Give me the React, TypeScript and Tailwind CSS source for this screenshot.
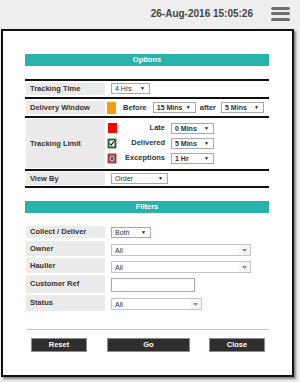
import clsx from 'clsx'

// Plain native-looking dropdown with a black ▼ arrow.
function Pick({ value, className }: { value: string; className?: string }) {
  return (
    <div
      className={clsx(
        'flex h-[11px] items-center justify-between border border-[#a9a9a9] bg-white pl-[3px] pr-[4px] text-[7px] leading-none text-[#333]',
        className,
      )}
    >
      <span>{value}</span>
      <span className="text-[5px] text-[#111]">▼</span>
    </div>
  )
}

// Wide "chosen" style dropdown with a soft grey caret.
function WidePick({ value, className }: { value: string; className?: string }) {
  return (
    <div
      className={clsx(
        'flex h-[12px] items-center justify-between border border-[#c4c4c4] bg-white pl-[3px] text-[7px] leading-none text-[#333]',
        className,
      )}
    >
      <span>{value}</span>
      <span className="flex h-full w-[11px] items-center justify-center bg-[#f6f6f6]">
        <svg width="5" height="3" viewBox="0 0 5 3">
          <path d="M0 0h5L2.5 3z" fill="#8a8a8a" />
        </svg>
      </span>
    </div>
  )
}

function Label({ children, className }: { children: React.ReactNode; className?: string }) {
  return (
    <div
      className={clsx(
        'flex w-[79px] shrink-0 items-center bg-[#ebebeb] pl-[4px] text-[7.5px] font-bold leading-none text-[#333]',
        className,
      )}
    >
      {children}
    </div>
  )
}

function Bar({ title }: { title: string }) {
  return (
    <div className="flex h-[12px] items-center justify-center bg-[#29b1ac] text-[7.5px] font-bold leading-none text-white">
      {title}
    </div>
  )
}

const Rule = () => <div className="h-[2px] bg-[#111]" />

function CheckBox() {
  return (
    <svg width="10" height="11" viewBox="0 0 10 11">
      <rect x="0.5" y="0.5" width="9" height="10" fill="#1f9a3a" />
      <rect x="2" y="2" width="6" height="7" fill="#fff" stroke="#111" strokeWidth="0.8" />
      <path d="M3 5.6l1.3 1.5L7 3.2" fill="none" stroke="#111" strokeWidth="1.1" />
    </svg>
  )
}

function CrossBox() {
  return (
    <svg width="10" height="11" viewBox="0 0 10 11">
      <rect x="0.5" y="0.5" width="9" height="10" fill="#ef3b3b" />
      <rect x="2" y="2" width="6" height="7" fill="#c9c9c9" stroke="#333" strokeWidth="0.8" />
      <path d="M3.2 3.4l3.6 4.2M6.8 3.4L3.2 7.6" stroke="#222" strokeWidth="1" />
    </svg>
  )
}

export default function App() {
  return (
    <div className="h-[382px] w-[300px] overflow-hidden bg-[#eeeeee] font-['Liberation_Sans',Arial,sans-serif]">
      {/* Top bar */}
      <div className="flex h-[29px] items-center justify-end gap-[18px] pb-[2px] pr-[10px]">
        <span className="text-[10px] font-bold leading-none text-[#444]">26-Aug-2016 15:05:26</span>
        <div className="flex w-[19px] flex-col gap-[2.5px]">
          <span className="h-[3px] rounded-[1.5px] bg-[#6e6e6e]" />
          <span className="h-[3px] rounded-[1.5px] bg-[#6e6e6e]" />
          <span className="h-[3px] rounded-[1.5px] bg-[#6e6e6e]" />
        </div>
      </div>

      {/* Dialog */}
      <div className="ml-[1px] h-[348px] w-[293px] border-2 border-[#111] bg-white pl-[22px] pr-[23px] pt-[23px] shadow-[2px_2px_2px_rgba(0,0,0,0.45)]">
        <Bar title="Options" />

        <div className="mt-[13px]">
          <Rule />
          <div className="flex h-[16px] py-[2px]">
            <Label className="ml-[1px] w-[78px]">Tracking Time</Label>
            <div className="flex items-start pl-[6px] pt-[0px]">
              <Pick value="4 Hrs" className="w-[39px]" />
            </div>
          </div>
          <Rule />
          <div className="flex h-[17px] py-[2px]">
            <Label className="ml-[1px] w-[78px]">Delivery Window</Label>
            <div className="flex items-center pl-[2px] text-[7.5px] font-bold leading-none text-[#333]">
              <span className="h-[12px] w-[9px] bg-[#f39c12]" />
              <span className="ml-[7px]">Before</span>
              <Pick value="15 Mins" className="ml-[6px] w-[43px]" />
              <span className="ml-[4px]">after</span>
              <Pick value="5 Mins" className="ml-[5px] w-[43px]" />
            </div>
          </div>
          <Rule />
          <div className="flex h-[51px] py-[1px]">
            <Label className="ml-[1px] w-[78px]">Tracking Limit</Label>
            <div className="flex flex-col gap-[3px] pl-[2px] pt-[3px] text-[7.5px] font-bold leading-none text-[#333]">
              <div className="flex h-[12px] items-center">
                <span className="flex w-[10px] justify-center">
                  <span className="h-[10px] w-[9px] bg-[#ff0000]" />
                </span>
                <span className="w-[48px] text-right">Late</span>
                <Pick value="0 Mins" className="ml-[6px] w-[43px]" />
              </div>
              <div className="flex h-[12px] items-center">
                <span className="flex w-[10px] justify-center">
                  <CheckBox />
                </span>
                <span className="w-[48px] text-right">Delivered</span>
                <Pick value="5 Mins" className="ml-[6px] w-[43px]" />
              </div>
              <div className="flex h-[12px] items-center">
                <span className="flex w-[10px] justify-center">
                  <CrossBox />
                </span>
                <span className="w-[48px] text-right">Exceptions</span>
                <Pick value="1 Hr" className="ml-[6px] w-[43px]" />
              </div>
            </div>
          </div>
          <Rule />
          <div className="flex h-[15px] py-[1px]">
            <Label className="ml-[1px] w-[78px]">View By</Label>
            <div className="flex items-center pl-[6px]">
              <Pick value="Order" className="w-[57px]" />
            </div>
          </div>
          <Rule />
        </div>

        <div className="mt-[13px]">
          <Bar title="Filters" />
        </div>

        {/* Filter rows */}
        <div className="mt-[13px] flex flex-col">
          <div className="flex h-[12px]">
            <Label className="ml-[1px] w-[78px]">Collect / Deliver</Label>
            <div className="flex items-center pl-[6px]">
              <Pick value="Both" className="h-[10px] w-[40px]" />
            </div>
          </div>
          <div className="mt-[3px] flex h-[15px]">
            <Label className="ml-[1px] w-[78px]">Owner</Label>
            <div className="flex items-end pl-[6px]">
              <WidePick value="All" className="w-[140px]" />
            </div>
          </div>
          <div className="mt-[2px] flex h-[15px]">
            <Label className="ml-[1px] w-[78px]">Haulier</Label>
            <div className="flex items-end pl-[6px]">
              <WidePick value="All" className="w-[140px]" />
            </div>
          </div>
          <div className="mt-[2px] flex h-[18px]">
            <Label className="ml-[1px] w-[78px]">Customer Ref</Label>
            <div className="flex items-end pb-[1px] pl-[6px]">
              <div className="h-[14px] w-[84px] border border-[#a9a9a9] bg-white" />
            </div>
          </div>
          <div className="mt-[2px] flex h-[16px]">
            <Label className="ml-[1px] w-[78px]">Status</Label>
            <div className="flex items-end pb-[1px] pl-[6px]">
              <WidePick value="All" className="w-[91px]" />
            </div>
          </div>
        </div>

        <div className="ml-[1px] mt-[18px] h-[1px] bg-[#c4c4c4]" />

        <div className="mt-[8px] flex pl-[6px] text-[7.5px] font-bold leading-none text-white">
          <button className="flex h-[14px] w-[56px] items-center justify-center border border-[#8c8c8c] bg-[#2f2f2f]">
            Reset
          </button>
          <button className="ml-[20px] flex h-[14px] w-[83px] items-center justify-center border border-[#8c8c8c] bg-[#2f2f2f]">
            Go
          </button>
          <button className="ml-[19px] flex h-[14px] w-[56px] items-center justify-center border border-[#8c8c8c] bg-[#2f2f2f]">
            Close
          </button>
        </div>
      </div>
    </div>
  )
}
